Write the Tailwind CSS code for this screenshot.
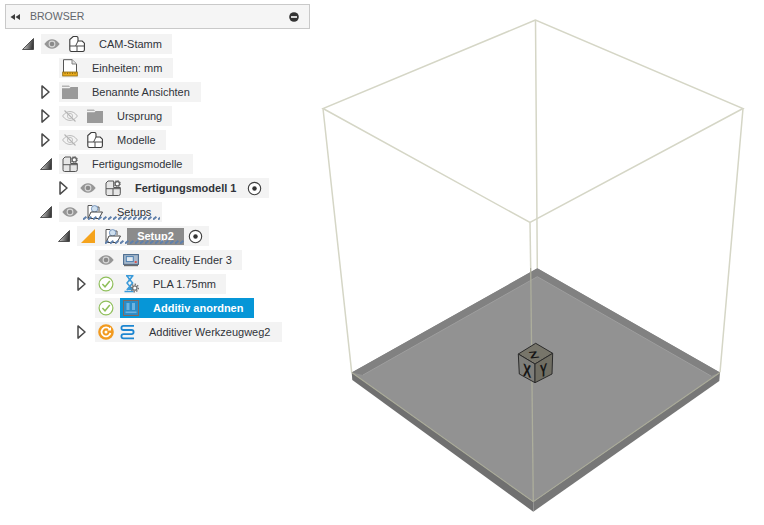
<!DOCTYPE html>
<html lang="de">
<head>
<meta charset="utf-8">
<title>Browser</title>
<script src="https://cdn.jsdelivr.net/npm/@tailwindcss/browser@4"></script>
</head>
<body>
<div class="relative w-[764px] h-[525px] overflow-hidden bg-white font-['Liberation_Sans',Arial,sans-serif] text-[11px] text-[#30333a]">

<svg class="absolute w-0 h-0" aria-hidden="true">
  <defs>
    <linearGradient id="tri" x1="0" y1="0" x2="1" y2="0.2"><stop offset="0" stop-color="#f2f2f2"/><stop offset="1" stop-color="#3c3c3c"/></linearGradient>
    <pattern id="wave" width="5" height="4" patternUnits="userSpaceOnUse"><path d="M0 3.6 L3.4 .8" stroke="#5f80ab" stroke-width="2" fill="none"/></pattern>
    <symbol id="open" viewBox="0 0 9 14"><path d="M1 .9 L8 7 L1 13.1Z" fill="#fff" stroke="#4a4a4a" stroke-width="1.5" stroke-linejoin="round"/></symbol>
    <symbol id="down" viewBox="0 0 12 12"><path d="M.5 11.5 L11.5 .5 V11.5Z" fill="url(#tri)" stroke="#333" stroke-width=".8" stroke-linejoin="round"/></symbol>
    <symbol id="eye" viewBox="0 0 16 16"><path d="M.3 8 C3 4.2 5.5 3.2 8 3.2 S13 4.2 15.7 8 C13 11.8 10.5 12.8 8 12.8 S3 11.8 .3 8Z" fill="#969696"/><circle cx="8" cy="8" r="3.4" fill="#d8d8d8"/><circle cx="8" cy="8" r="2.3" fill="#8a8a8a"/></symbol>
    <symbol id="eyeoff" viewBox="0 0 16 16"><path d="M.6 8 C3 4.6 5.5 3.6 8 3.6 S13 4.6 15.4 8 C13 11.4 10.5 12.4 8 12.4 S3 11.4 .6 8Z" fill="none" stroke="#b9b9b9"/><circle cx="8" cy="8" r="2.6" fill="none" stroke="#c4c4c4"/><path d="M2.5 2.5 L13.5 13.5" stroke="#b4b4b4" stroke-width="1.1"/></symbol>
    <symbol id="comp" viewBox="0 0 16 16"><path d="M2.6 15.5 H13.5 Q15.4 15.5 15.4 13.7 V7.2 L13.2 5 H9 V2 Q9 .5 7.5 .5 H4.2 L.8 3.6 V13.7 Q.8 15.5 2.6 15.5Z" fill="#fff" stroke="#3a3a3a" stroke-width="1.1"/><path d="M.8 10 H15.4 M8 10 V15.5 M9 5 L6.6 10" fill="none" stroke="#4a4a4a" stroke-width="1"/></symbol>
    <symbol id="doc" viewBox="0 0 16 18"><path d="M1.5 13 V.7 H10 L14.5 5 V13" fill="#fff" stroke="#555" stroke-width="1"/><path d="M10 .7 V5 H14.5" fill="#e3e3e3" stroke="#777" stroke-width=".9"/><rect x=".7" y="13" width="14.6" height="4" fill="#e9ab1c" stroke="#8a6a12" stroke-width=".8"/><path d="M3 13.5 V15 M5.5 13.5 V15 M8 13.5 V15 M10.5 13.5 V15 M13 13.5 V15" stroke="#7a5b10" stroke-width=".8"/></symbol>
    <symbol id="folder" viewBox="0 0 16 16"><path d="M0 1.5 H7 L8 3 H0Z" fill="#b4b4b4"/><path d="M0 4.2 H7.5 L8.6 3 H16 V15 H0Z" fill="#9a9a9a"/></symbol>
    <symbol id="gearcomp" viewBox="0 0 16 16"><path d="M2.5 15.5 H13.5 Q15.3 15.5 15.3 13.7 V7.5 H8.7 V1 H3 L1 3 V13.7 Q1 15.5 2.5 15.5Z" fill="#e6e6e6" stroke="#555" stroke-width="1"/><path d="M1 8.7 H15.3 M8 8.7 V15.5" stroke="#555" stroke-width="1"/><circle cx="12.3" cy="3.7" r="2.2" fill="#fff" stroke="#666" stroke-width="1.3"/><circle cx="12.3" cy="3.7" r="3.2" fill="none" stroke="#666" stroke-width="1" stroke-dasharray="1.2 1.3"/></symbol>
    <symbol id="setup" viewBox="0 0 16 16"><path d="M1 14.5 V1.5 H5 L6 3 H12 V7" fill="#fff" stroke="#555" stroke-width="1"/><circle cx="7.6" cy="4.8" r="3.2" fill="#cfe0ef" stroke="#6f8fb8" stroke-width=".9"/><path d="M1 14.5 L4 8 H15.5 L12 14.5Z" fill="#fff" stroke="#444" stroke-width="1" stroke-linejoin="round"/></symbol>
    <symbol id="target" viewBox="0 0 16 16"><circle cx="8" cy="8" r="6.6" fill="#fff" stroke="#3f3f3f" stroke-width="1.2"/><circle cx="8" cy="8" r="2.4" fill="#333"/></symbol>
    <symbol id="check" viewBox="0 0 16 16"><circle cx="8" cy="8" r="6.9" fill="#fff" stroke="#8fbf5a" stroke-width="1.2"/><path d="M4.4 8 L7 10.8 L11.8 5" fill="none" stroke="#8fbf5a" stroke-width="1.5"/></symbol>
    <symbol id="spin" viewBox="0 0 16 16"><circle cx="8" cy="8" r="7.8" fill="#f29a1f"/><path d="M11.6 5.2 A4.5 4.5 0 1 0 12.4 9" fill="none" stroke="#fff" stroke-width="1.8"/><path d="M9.4 6.6 H13 V3Z" fill="#fff"/><circle cx="8" cy="8" r="1.5" fill="#fff"/></symbol>
    <symbol id="machine" viewBox="0 0 16 16"><rect x=".6" y="2.6" width="14.8" height="9.8" fill="#a9bacd" stroke="#4c6c90" stroke-width="1.1"/><rect x="3.3" y="4.6" width="7" height="5" fill="#dfe8f1" stroke="#4c7fb0"/><rect x="11.7" y="9" width="2" height="2" fill="#d9534f"/><rect x="1" y="12.6" width="14" height="1.6" fill="#6a6a6a"/></symbol>
    <symbol id="mat" viewBox="0 0 16 18"><path d="M3 .8 H10.5 M4 1 L9.6 8 L3.8 15 M9.6 1 L4 8 L9.8 15 M1.5 16.6 H10.5" fill="none" stroke="#3a9ad9" stroke-width="1.5"/><path d="M5 3 H8.6 L6.8 7Z M4.5 15 L6.8 11 L9 15Z" fill="#3a9ad9"/><circle cx="11.8" cy="13" r="2.2" fill="#fff" stroke="#707070" stroke-width="1.3"/><circle cx="11.8" cy="13" r="3.7" fill="none" stroke="#707070" stroke-width="1.4" stroke-dasharray="1.4 1.4"/></symbol>
    <symbol id="arrange" viewBox="0 0 16 16"><rect x=".5" y=".5" width="15" height="15" fill="#2a8cc8" stroke="#7d6a62"/><rect x="3.5" y="3" width="3" height="7" fill="#6cb4e2"/><rect x="9" y="3" width="3" height="7" fill="#6cb4e2"/><rect x="2.5" y="11.5" width="11" height="1.6" fill="#6cb4e2"/></symbol>
    <symbol id="path" viewBox="0 0 15 16"><path d="M14 1.8 H3.5 A2.1 2.1 0 0 0 3.5 6 H11.5 A2.1 2.1 0 0 1 11.5 10.2 H3.5 A2.1 2.1 0 0 0 3.5 14.4 H14" fill="none" stroke="#1d86d1" stroke-width="1.8"/></symbol>
  </defs>
</svg>

<!-- 3D viewport -->
<svg class="absolute inset-0" width="764" height="525" viewBox="0 0 764 525" aria-hidden="true">
  <g fill="none" stroke="#d5d6c6" stroke-width="1.5">
    <path d="M535.5 20 L323 108.5 L530 222.5 L743 108.5Z"/>
    <path d="M535.5 20 L537.3 268 M323 108.5 L351.7 372.3 M743 108.5 L720 372.3"/>
  </g>
  <polygon points="537.3,268.3 720,372.5 533.3,501.7 351.7,372.5" fill="#929292"/>
  <polygon points="537.3,268.3 720,372.5 711,376 537.3,276.7 363,375 351.7,372.5" fill="#818181"/>
  <path d="M363 375 L537.3 276.7 L711 376" fill="none" stroke="#9e9e9e" stroke-width="1"/>
  <polygon points="351.7,372.5 533.3,501.7 533.3,511.7 352.3,380" fill="#707070"/>
  <polygon points="720,372.5 533.3,501.7 533.3,511.7 719.3,381" fill="#777777"/>
  <path d="M351.7 372.5 L533.3 501.7 L720 372.5" fill="none" stroke="#a9aa98" stroke-width="1.1"/>
  <path d="M530 222.5 L530.7 268" fill="none" stroke="#d5d6c6" stroke-width="1.5"/>
  <path d="M530.7 268 L533.3 501.7" fill="none" stroke="#adae9c" stroke-width="1.3"/>
  <g stroke="#2b2b2b" stroke-width="1" stroke-linejoin="round">
    <polygon points="535.7,343.3 552.7,353.3 535,364 518.3,354" fill="#77756a"/>
    <polygon points="518.3,354 535,364 535,382.7 519.3,374" fill="#7e7e7a"/>
    <polygon points="535,364 552.7,353.3 552,374 535,382.7" fill="#706e63"/>
  </g>
  <g font-family="'Liberation Sans',Arial,sans-serif" font-weight="700" fill="#161616" text-anchor="middle">
    <text font-size="18" transform="matrix(.68 .2 0 1 527 377)">X</text>
    <text font-size="18" transform="matrix(.62 -.2 0 1 543.5 376.5)">Y</text>
    <text font-size="13" transform="matrix(1.15 -.12 .3 .72 535 358)">Z</text>
  </g>
</svg>

<!-- Browser panel -->
<div class="relative pl-[5px] pt-[4px] w-[310px]">
  <div class="flex items-center h-[25px] border border-[#c9c9c9] bg-[#f5f5f5] pl-[4px] pr-[10px] text-[#62666c] text-[10.5px]">
    <svg class="w-[10px] h-[6px]" viewBox="0 0 10 6"><path d="M5 0 V6 L0.5 3Z M10 0 V6 L5.5 3Z" fill="#3b3b3b"/></svg>
    <span class="ml-[10px]">BROWSER</span>
    <svg class="ml-auto w-[10px] h-[10px]" viewBox="0 0 10 10"><circle cx="5" cy="5" r="4.8" fill="#333"/><rect x="2" y="4.2" width="6" height="1.6" fill="#fff"/></svg>
  </div>
</div>

<div class="relative mt-[5px] flex flex-col gap-[4px]">
  <!-- CAM-Stamm -->
  <div class="flex h-[20px] items-center pl-[21px]">
    <span class="flex w-[20px] shrink-0 items-center pl-[1px]"><svg class="w-[12px] h-[12px]"><use href="#down"/></svg></span>
    <div class="flex h-[20px] items-center bg-[#f3f3f3] pl-[3px] pr-[10px]">
      <svg class="w-[16px] h-[16px]"><use href="#eye"/></svg>
      <svg class="ml-[9px] w-[16px] h-[16px]"><use href="#comp"/></svg>
      <span class="ml-[14px]">CAM-Stamm</span>
    </div>
  </div>
  <!-- Einheiten -->
  <div class="flex h-[20px] items-center pl-[39px]">
    <span class="w-[20px] shrink-0"></span>
    <div class="flex h-[20px] items-center bg-[#f3f3f3] pl-[3px] pr-[11px]">
      <svg class="w-[16px] h-[18px]"><use href="#doc"/></svg>
      <span class="ml-[14px]">Einheiten: mm</span>
    </div>
  </div>
  <!-- Benannte Ansichten -->
  <div class="flex h-[20px] items-center pl-[39px]">
    <span class="flex w-[20px] shrink-0 items-center pl-[2px]"><svg class="w-[9px] h-[14px]"><use href="#open"/></svg></span>
    <div class="flex h-[20px] items-center bg-[#f3f3f3] pl-[3px] pr-[11px]">
      <svg class="w-[16px] h-[16px]"><use href="#folder"/></svg>
      <span class="ml-[14px]">Benannte Ansichten</span>
    </div>
  </div>
  <!-- Ursprung -->
  <div class="flex h-[20px] items-center pl-[39px]">
    <span class="flex w-[20px] shrink-0 items-center pl-[2px]"><svg class="w-[9px] h-[14px]"><use href="#open"/></svg></span>
    <div class="flex h-[20px] items-center bg-[#f3f3f3] pl-[3px] pr-[3px]">
      <svg class="w-[16px] h-[16px]"><use href="#eyeoff"/></svg>
      <svg class="ml-[9px] w-[16px] h-[16px]"><use href="#folder"/></svg>
      <span class="ml-[14px] mr-[7px]">Ursprung</span>
    </div>
  </div>
  <!-- Modelle -->
  <div class="flex h-[20px] items-center pl-[39px]">
    <span class="flex w-[20px] shrink-0 items-center pl-[2px]"><svg class="w-[9px] h-[14px]"><use href="#open"/></svg></span>
    <div class="flex h-[20px] items-center bg-[#f3f3f3] pl-[3px] pr-[10px]">
      <svg class="w-[16px] h-[16px]"><use href="#eyeoff"/></svg>
      <svg class="ml-[9px] w-[16px] h-[16px]"><use href="#comp"/></svg>
      <span class="ml-[14px]">Modelle</span>
    </div>
  </div>
  <!-- Fertigungsmodelle -->
  <div class="flex h-[20px] items-center pl-[39px]">
    <span class="flex w-[20px] shrink-0 items-center pl-[1px]"><svg class="w-[12px] h-[12px]"><use href="#down"/></svg></span>
    <div class="flex h-[20px] items-center bg-[#f3f3f3] pl-[3px] pr-[10px]">
      <svg class="w-[16px] h-[16px]"><use href="#gearcomp"/></svg>
      <span class="ml-[14px]">Fertigungsmodelle</span>
    </div>
  </div>
  <!-- Fertigungsmodell 1 -->
  <div class="flex h-[20px] items-center pl-[57px]">
    <span class="flex w-[20px] shrink-0 items-center pl-[2px]"><svg class="w-[9px] h-[14px]"><use href="#open"/></svg></span>
    <div class="flex h-[20px] items-center bg-[#f3f3f3] pl-[3px] pr-[7px]">
      <svg class="w-[16px] h-[16px]"><use href="#eye"/></svg>
      <svg class="ml-[9px] w-[16px] h-[16px]"><use href="#gearcomp"/></svg>
      <span class="ml-[14px] font-bold">Fertigungsmodell 1</span>
      <svg class="ml-[11px] w-[15px] h-[15px]"><use href="#target"/></svg>
    </div>
  </div>
  <!-- Setups -->
  <div class="flex h-[20px] items-center pl-[39px]">
    <span class="flex w-[20px] shrink-0 items-center pl-[1px]"><svg class="w-[12px] h-[12px]"><use href="#down"/></svg></span>
    <div class="relative flex h-[20px] items-center bg-[#f3f3f3] pl-[3px] pr-[11px]">
      <svg class="w-[16px] h-[16px]"><use href="#eye"/></svg>
      <svg class="ml-[9px] w-[16px] h-[16px]"><use href="#setup"/></svg>
      <span class="ml-[14px]">Setups</span>
      <svg class="absolute left-[24px] top-[14px] w-[77px] h-[4px]"><rect width="77" height="4" fill="url(#wave)"/></svg>
    </div>
  </div>
  <!-- Setup2 -->
  <div class="flex h-[20px] items-center pl-[57px]">
    <span class="flex w-[20px] shrink-0 items-center pl-[1px]"><svg class="w-[12px] h-[12px]"><use href="#down"/></svg></span>
    <div class="relative flex h-[20px] items-center bg-[#f3f3f3] pl-[4px] pr-[6px]">
      <svg class="w-[14px] h-[14px]" viewBox="0 0 14 14"><path d="M0 14 L14 0 V14Z" fill="#f5a31c"/></svg>
      <svg class="ml-[10px] w-[16px] h-[16px]"><use href="#setup"/></svg>
      <span class="ml-[6px] flex h-[17px] w-[57px] items-center justify-center bg-[#8b8b8b] font-bold text-white">Setup2</span>
      <svg class="ml-[4px] w-[15px] h-[15px]"><use href="#target"/></svg>
      <svg class="absolute left-[28px] top-[14px] w-[79px] h-[4px]"><rect width="79" height="4" fill="url(#wave)"/></svg>
    </div>
  </div>
  <!-- Creality -->
  <div class="flex h-[20px] items-center pl-[75px]">
    <span class="w-[20px] shrink-0"></span>
    <div class="flex h-[20px] items-center bg-[#f3f3f3] pl-[3px] pr-[10px]">
      <svg class="w-[16px] h-[16px]"><use href="#eye"/></svg>
      <svg class="ml-[9px] w-[16px] h-[16px]"><use href="#machine"/></svg>
      <span class="ml-[14px]">Creality Ender 3</span>
    </div>
  </div>
  <!-- PLA -->
  <div class="flex h-[20px] items-center pl-[75px]">
    <span class="flex w-[20px] shrink-0 items-center pl-[2px]"><svg class="w-[9px] h-[14px]"><use href="#open"/></svg></span>
    <div class="flex h-[20px] items-center bg-[#f3f3f3] pl-[3px] pr-[10px]">
      <svg class="w-[16px] h-[16px]"><use href="#check"/></svg>
      <svg class="ml-[9px] w-[16px] h-[18px]"><use href="#mat"/></svg>
      <span class="ml-[14px]">PLA 1.75mm</span>
    </div>
  </div>
  <!-- Additiv anordnen -->
  <div class="flex h-[20px] items-center pl-[75px]">
    <span class="w-[20px] shrink-0"></span>
    <div class="flex h-[20px] items-center bg-[#f3f3f3] pl-[3px]">
      <svg class="w-[16px] h-[16px]"><use href="#check"/></svg>
      <div class="ml-[6px] flex h-[20px] items-center bg-[#0696d7] pl-[3px] pr-[11px]">
        <svg class="w-[16px] h-[16px]"><use href="#arrange"/></svg>
        <span class="ml-[14px] font-bold text-white">Additiv anordnen</span>
      </div>
    </div>
  </div>
  <!-- Additiver Werkzeugweg2 -->
  <div class="flex h-[20px] items-center pl-[75px]">
    <span class="flex w-[20px] shrink-0 items-center pl-[2px]"><svg class="w-[9px] h-[14px]"><use href="#open"/></svg></span>
    <div class="flex h-[20px] items-center bg-[#f3f3f3] pl-[3px] pr-[12px]">
      <svg class="w-[16px] h-[16px]"><use href="#spin"/></svg>
      <svg class="ml-[6px] w-[15px] h-[16px]"><use href="#path"/></svg>
      <span class="ml-[14px]">Additiver Werkzeugweg2</span>
    </div>
  </div>
</div>
</div>
</body>
</html>
